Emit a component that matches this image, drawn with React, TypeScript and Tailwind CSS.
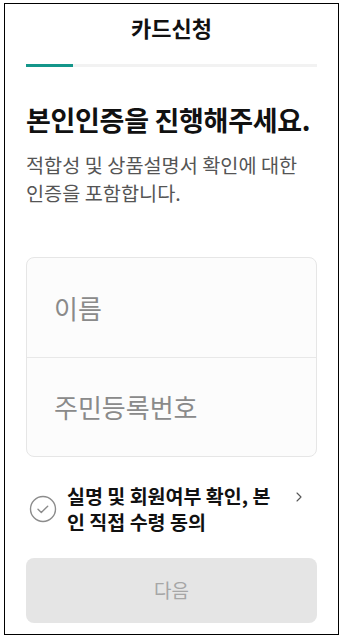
import { ChevronRight } from 'lucide-react';

const font = { fontFamily: '"Noto Sans CJK KR", "Noto Sans", sans-serif' };

function CheckCircle() {
  return (
    <svg width="28" height="28" viewBox="0 0 28 28" fill="none" className="shrink-0">
      <circle cx="14" cy="14" r="12.5" stroke="#8c8c8c" strokeWidth="1.4" />
      <path d="M9 14.2l3.3 3.2 6.4-6.2" stroke="#8c8c8c" strokeWidth="1.4" strokeLinecap="round" strokeLinejoin="round" />
    </svg>
  );
}

export default function App() {
  return (
    <div className="w-[345px] h-[641px] bg-white pl-[4px] pt-[3px]" style={font}>
      <div className="w-[335px] h-[632px] border-[1.5px] border-black bg-white px-[21px]">
        {/* Header */}
        <h1 className="mt-[7.5px] text-center text-[22px] font-bold leading-[30px] text-[#111]">카드신청</h1>

        {/* Progress */}
        <div className="mt-[22px] flex h-[3px] w-full bg-[#f2f2f2]">
          <div className="h-full w-[47px] bg-[#14968a]" />
        </div>

        {/* Title */}
        <h2 className="mt-[36px] whitespace-nowrap text-[27px] font-bold leading-[34px] tracking-[-0.3px] text-[#111]">
          본인인증을 진행해주세요.
        </h2>
        <p className="mt-[14px] w-[282px] text-[19.7px] leading-[28px] text-[#555]">
          적합성 및 상품설명서 확인에 대한 인증을 포함합니다.
        </p>

        {/* Inputs */}
        <div className="mt-[50px] flex flex-col rounded-[8px] border border-[#e6e6e6] bg-[#fcfcfc]">
          <div className="flex h-[99px] items-center px-[27px] text-[26px] text-[#8a8a8a]">이름</div>
          <div className="h-px bg-[#e8e8e8]" />
          <div className="flex h-[98px] items-center px-[27px] text-[26px] text-[#8a8a8a]">주민등록번호</div>
        </div>

        {/* Agreement */}
        <div className="mt-[26px] flex items-center">
          <div className="ml-[3px]">
            <CheckCircle />
          </div>
          <p className="ml-[10px] w-[212px] text-[19.5px] font-semibold leading-[26px] text-[#111]">
            실명 및 회원여부 확인, 본인 직접 수령 동의
          </p>
          <div className="ml-auto mr-[10px] -mt-[24px] text-[#555]">
            <ChevronRight size={16} strokeWidth={1.6} />
          </div>
        </div>

        {/* Button */}
        <button className="mt-[23px] flex h-[65px] w-full items-center justify-center rounded-[8px] bg-[#e5e5e5] text-[19px] text-[#a6a6a6]">
          다음
        </button>
      </div>
    </div>
  );
}
